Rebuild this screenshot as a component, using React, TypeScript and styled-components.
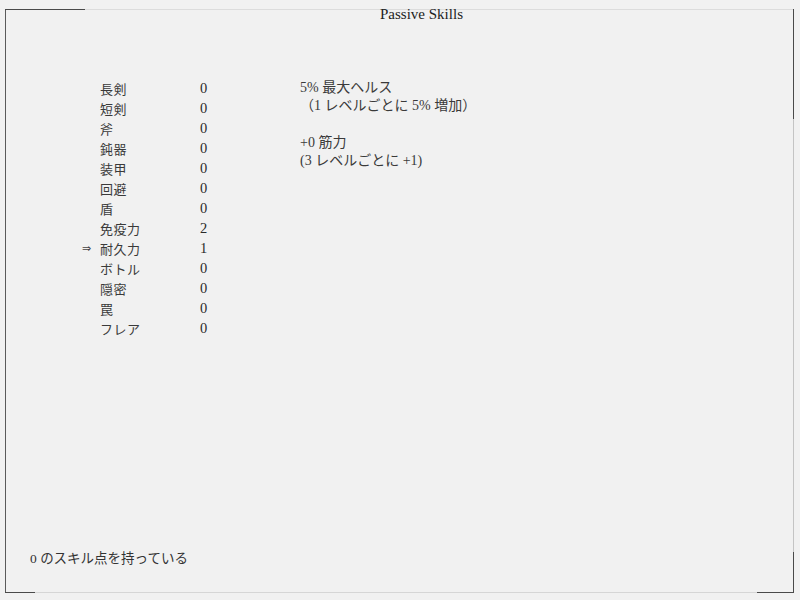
import React from 'react';
import styled, { createGlobalStyle } from 'styled-components';

type Skill = {
  name: string;
  level: number;
  selected?: boolean;
};

const skills: Skill[] = [
  { name: '長剣', level: 0 },
  { name: '短剣', level: 0 },
  { name: '斧', level: 0 },
  { name: '鈍器', level: 0 },
  { name: '装甲', level: 0 },
  { name: '回避', level: 0 },
  { name: '盾', level: 0 },
  { name: '免疫力', level: 2 },
  { name: '耐久力', level: 1, selected: true },
  { name: 'ボトル', level: 0 },
  { name: '隠密', level: 0 },
  { name: '罠', level: 0 },
  { name: 'フレア', level: 0 },
];

const effects = [
  ['5% 最大ヘルス', '（1 レベルごとに 5% 増加）'],
  ['+0 筋力', '(3 レベルごとに +1)'],
];

const GlobalStyle = createGlobalStyle`
  html, body {
    margin: 0;
    padding: 0;
    background: #f1f1f1;
  }
  body {
    font-family: "Liberation Serif", "Noto Sans CJK JP", serif;
    color: #2e2e2e;
  }
`;

const Page = styled.div`
  width: 800px;
  height: 600px;
  box-sizing: border-box;
  padding: 9px 6px 7px 5px;
  background: #f1f1f1;
`;

const Frame = styled.div`
  position: relative;
  height: 100%;
  box-sizing: border-box;
  border-top: 1px solid #dcdcdc;
  border-right: 1px solid #c4c4c4;
  border-bottom: 1px solid #d6d6d6;
  border-left: 1px solid #5a5a5a;
  display: flex;
  flex-direction: column;
`;

const Corner = styled.span<{ $pos: 'tl' | 'tr' | 'br' | 'bl' }>`
  position: absolute;
  pointer-events: none;
  border-color: #4a4a4a;
  border-style: solid;
  border-width: 0;
  ${({ $pos }) =>
    $pos === 'tl'
      ? 'top: -1px; left: -1px; width: 80px; height: 40px; border-top-width: 1px;'
      : $pos === 'tr'
        ? 'top: -1px; right: -1px; width: 28px; height: 110px; border-right-width: 1px;'
        : $pos === 'br'
          ? 'bottom: -1px; right: -1px; width: 36px; height: 40px; border-bottom-width: 1px; border-right-width: 1px;'
          : 'bottom: -1px; left: -1px; width: 30px; height: 20px; border-bottom-width: 1px;'}
`;

const Title = styled.div`
  margin-top: -4px;
  padding-left: 44px;
  text-align: center;
  font-size: 15px;
  line-height: 16px;
  color: #222;
`;

const Body = styled.div`
  display: flex;
  margin-top: 56px;
  padding-left: 76px;
`;

const SkillList = styled.ul`
  list-style: none;
  margin: 0;
  padding: 0;
  width: 218px;
`;

const SkillRow = styled.li`
  display: grid;
  grid-template-columns: 18px 100px 1fr;
  height: 20px;
  align-items: center;
  font-size: 13px;
`;

const Cursor = styled.span`
  font-family: "DejaVu Sans", sans-serif;
  font-size: 11px;
  color: #444;
`;

const SkillName = styled.span`
  color: #3a3a3a;
  letter-spacing: 0.5px;
`;

const SkillLevel = styled.span`
  font-size: 14.5px;
  color: #2a2a2a;
`;

const Effects = styled.div`
  display: flex;
  flex-direction: column;
  gap: 19px;
  padding-top: 1px;
`;

const Effect = styled.div`
  font-size: 14px;
  line-height: 18px;
  color: #3a3a3a;
`;

const Footer = styled.div`
  margin-top: auto;
  margin-bottom: 25px;
  padding-left: 24px;
  font-size: 13.5px;
  color: #333;
`;

export default function App() {
  return (
    <>
      <GlobalStyle />
      <Page>
        <Frame>
          <Corner $pos="tl" />
          <Corner $pos="tr" />
          <Corner $pos="br" />
          <Corner $pos="bl" />
          <Title>Passive Skills</Title>
          <Body>
            <SkillList>
              {skills.map((s) => (
                <SkillRow key={s.name}>
                  <Cursor>{s.selected ? '⇒' : ''}</Cursor>
                  <SkillName>{s.name}</SkillName>
                  <SkillLevel>{s.level}</SkillLevel>
                </SkillRow>
              ))}
            </SkillList>
            <Effects>
              {effects.map(([value, rule]) => (
                <Effect key={value}>
                  <div>{value}</div>
                  <div>{rule}</div>
                </Effect>
              ))}
            </Effects>
          </Body>
          <Footer>0 のスキル点を持っている</Footer>
        </Frame>
      </Page>
    </>
  );
}
